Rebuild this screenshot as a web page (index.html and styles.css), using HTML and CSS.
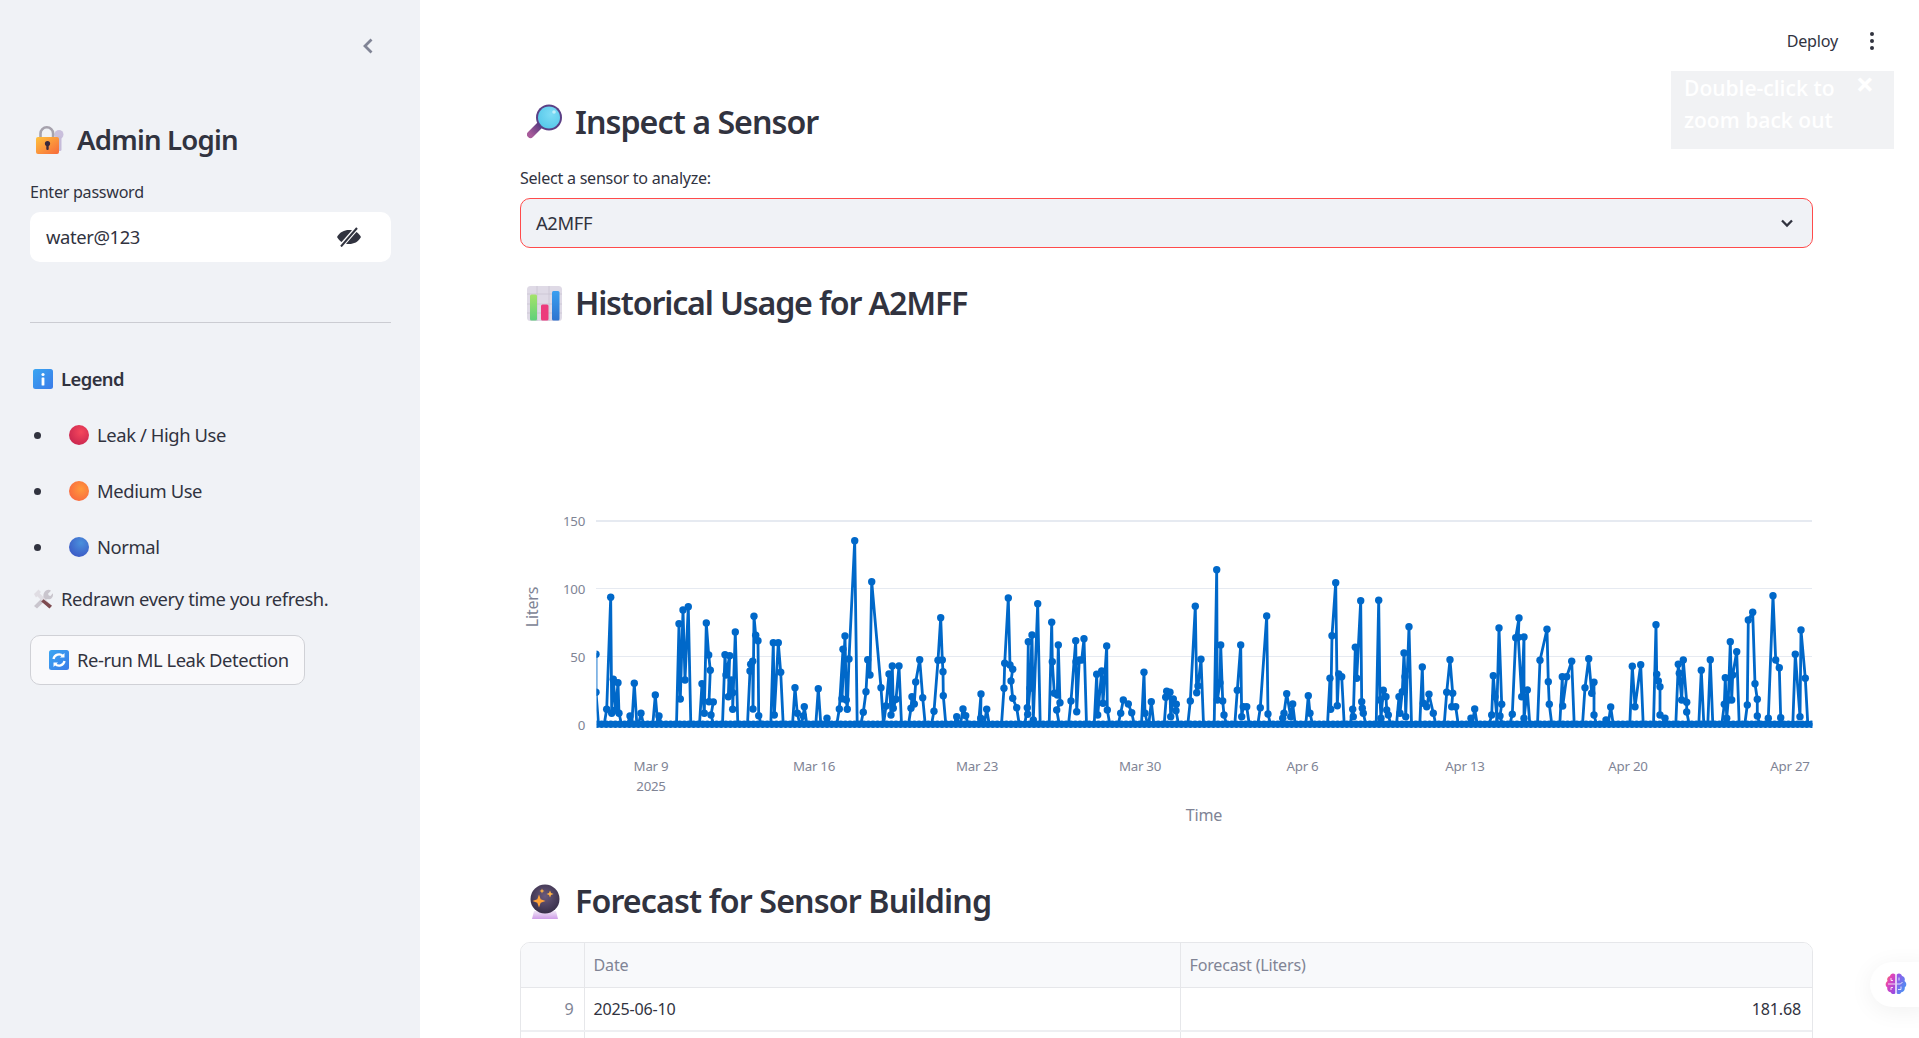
FILE: index.html
```html
<!DOCTYPE html>
<html lang="en">
<head>
<meta charset="utf-8">
<title>Water Sensor Dashboard</title>
<link rel="stylesheet" href="styles.css">
</head>
<body>
<div class="app">
  <aside class="sidebar">
    <div class="collapse-row">
      <svg class="chev-left" viewBox="0 0 12 18" width="12" height="18"><path d="M9.500 2.500 3 9l6.500 6.500" fill="none" stroke="#808495" stroke-width="2.800"/></svg>
    </div>
    <h2 class="side-title">
      <svg class="side-emoji" viewBox="0 0 30 30" width="30" height="30">
        <defs><linearGradient id="lockg" x1="0" y1="0" x2="1" y2="1"><stop offset="0" stop-color="#ffc23d"/><stop offset="1" stop-color="#f7693a"/></linearGradient></defs>
        <circle cx="24" cy="9.500" r="4.500" fill="#c9bfdc"/><rect x="22" y="11" width="4.500" height="15" rx="1.500" fill="#c6bcd9"/>
        <path d="M5.500 14V8.500a6.300 6.300 0 0 1 12.600 0V14" fill="none" stroke="#a6a2ad" stroke-width="2.600"/>
        <rect x="1" y="12" width="23" height="17" rx="2" fill="url(#lockg)"/>
        <circle cx="12.500" cy="18.500" r="2.600" fill="#3b2a3c"/><rect x="11.300" y="19" width="2.400" height="6" rx="1" fill="#3b2a3c"/>
      </svg>
      <span>Admin Login</span>
    </h2>
    <label class="field-label side-label">Enter password</label>
    <div class="pw-input">
      <span class="pw-value">water@123</span>
      <svg class="eye" viewBox="0 0 26 20" width="26" height="20">
        <path d="M1 10C4 5 8 3 13 3s9 2 12 7c-3 5-7 7-12 7S4 15 1 10z" fill="#31333f"/>
        <path d="M5.500 18.500 20.500 1.500" stroke="#fff" stroke-width="4.500"/>
        <path d="M5 19.500 21 1" stroke="#31333f" stroke-width="2"/>
      </svg>
    </div>
    <hr class="side-rule">
    <p class="legend-title">
      <svg class="inline-emoji" viewBox="0 0 20 20" width="20" height="20"><defs><linearGradient id="infog" x1="0" y1="0" x2="1" y2="1"><stop offset="0" stop-color="#3aa6f2"/><stop offset="1" stop-color="#3b7be8"/></linearGradient></defs><rect width="20" height="20" rx="2.500" fill="url(#infog)"/><circle cx="10" cy="5.500" r="1.600" fill="#fff"/><rect x="8.600" y="8.500" width="2.800" height="8" rx=".6" fill="#fff"/></svg>
      <strong>Legend</strong>
    </p>
    <ul class="legend-list">
      <li class="legend-item">
        <svg class="dot-emoji" viewBox="0 0 20 20" width="20" height="20"><defs><radialGradient id="redg" cx=".6" cy=".35" r=".7"><stop offset="0" stop-color="#f5475c"/><stop offset="1" stop-color="#c9264f"/></radialGradient></defs><circle cx="10" cy="10" r="10" fill="url(#redg)"/></svg>
        <span>Leak / High Use</span>
      </li>
      <li class="legend-item">
        <svg class="dot-emoji" viewBox="0 0 20 20" width="20" height="20"><defs><radialGradient id="orag" cx=".6" cy=".4" r=".7"><stop offset="0" stop-color="#ff9a3c"/><stop offset="1" stop-color="#f9663f"/></radialGradient></defs><circle cx="10" cy="10" r="10" fill="url(#orag)"/></svg>
        <span>Medium Use</span>
      </li>
      <li class="legend-item">
        <svg class="dot-emoji" viewBox="0 0 20 20" width="20" height="20"><defs><radialGradient id="blug" cx=".6" cy=".3" r=".8"><stop offset="0" stop-color="#4a90dc"/><stop offset="1" stop-color="#3a55c4"/></radialGradient></defs><circle cx="10" cy="10" r="10" fill="url(#blug)"/></svg>
        <span>Normal</span>
      </li>
    </ul>
    <p class="note">
      <svg class="inline-emoji" viewBox="0 0 20 20" width="20" height="20">
        <path d="M13 1.500c2-1 4-.8 5 .3l-3 3 .8 1.600 1.700.6 2.300-2.800c.6 2 0 4-1.500 5.200-1.300 1-3 1.200-4.400.6L4 19.500 1 17l9.500-9.500c-.4-2.300.6-4.800 2.500-6z" fill="#c9c5cd"/>
        <path d="M1 5 5.500.5l2.500 2.500-1.300 1.300L19 16.700l-2.500 2.800L4.300 7.200 3 8.500z" fill="#e0dde3"/>
        <path d="M10.500 10.200 19 16.700l-2.500 2.800-8.300-7z" fill="#7d4a4f"/>
      </svg>
      <span>Redrawn every time you refresh.</span>
    </p>
    <button class="rerun" type="button">
      <svg class="inline-emoji" viewBox="0 0 20 20" width="20" height="20"><defs><linearGradient id="refg" x1="0" y1="0" x2="1" y2="1"><stop offset="0" stop-color="#3aa6f2"/><stop offset="1" stop-color="#3b7be8"/></linearGradient></defs><rect width="20" height="20" rx="2.500" fill="url(#refg)"/><path d="M4.500 9a5.600 5.600 0 0 1 9.500-3M15.500 11a5.600 5.600 0 0 1-9.500 3" fill="none" stroke="#fff" stroke-width="2.300"/><path d="M15.500 3v4.500H11zM4.500 17v-4.500H9z" fill="#fff"/></svg>
      <span>Re-run ML Leak Detection</span>
    </button>
  </aside>

  <main class="main">
    <div class="toolbar">
      <span class="deploy">Deploy</span>
      <svg class="kebab" viewBox="0 0 6 20" width="6" height="20"><circle cx="3" cy="3" r="2" fill="#31333f"/><circle cx="3" cy="10" r="2" fill="#31333f"/><circle cx="3" cy="17" r="2" fill="#31333f"/></svg>
    </div>
    <div class="content">
      <h3 class="heading heading-first">
        <svg class="head-emoji" viewBox="0 0 36 36" width="36" height="36">
          <defs><radialGradient id="lensg" cx=".6" cy=".35" r=".7"><stop offset="0" stop-color="#7edcf5"/><stop offset="1" stop-color="#56c8ea"/></radialGradient><linearGradient id="handg" x1="1" y1="0" x2="0" y2="1"><stop offset="0" stop-color="#5c3a80"/><stop offset="1" stop-color="#a75b9a"/></linearGradient></defs>
          <path d="M13 21 3.500 30.500" stroke="url(#handg)" stroke-width="7" stroke-linecap="round"/>
          <circle cx="22" cy="13.500" r="13" fill="#5b3f85"/><circle cx="22" cy="13.500" r="11" fill="url(#lensg)"/><circle cx="27" cy="8" r="1.800" fill="#bfeefa"/>
        </svg>
        <span>Inspect a Sensor</span>
      </h3>
      <label class="field-label main-label">Select a sensor to analyze:</label>
      <div class="select">
        <span>A2MFF</span>
        <svg class="chev-down" viewBox="0 0 14 10" width="14" height="10"><path d="M2 2.500 7 7.500l5-5" fill="none" stroke="#31333f" stroke-width="2.300"/></svg>
      </div>
      <h3 class="heading heading-second">
        <svg class="head-emoji" viewBox="0 0 36 36" width="36" height="36">
          <defs><linearGradient id="bgr" x1="0" y1="0" x2="0" y2="1"><stop offset="0" stop-color="#a5e36a"/><stop offset="1" stop-color="#5fd07a"/></linearGradient><linearGradient id="bbl" x1="0" y1="0" x2="0" y2="1"><stop offset="0" stop-color="#3b9ff0"/><stop offset="1" stop-color="#2e74cf"/></linearGradient></defs>
          <rect width="35" height="35" rx="3.500" fill="#dfdae6"/>
          <path d="M0 8h35M0 18h35M0 27h35M10 0v35M22 0v35" stroke="#c9c4d2" stroke-width=".8"/>
          <rect x="3" y="8.500" width="7" height="26" rx="1.500" fill="url(#bgr)"/>
          <rect x="14" y="18.500" width="7.500" height="16" rx="1.500" fill="#ec3a7c"/>
          <rect x="25" y="5" width="7.500" height="29.500" rx="1.500" fill="url(#bbl)"/>
        </svg>
        <span>Historical Usage for A2MFF</span>
      </h3>
      <svg class="chart" viewBox="520 325 1293 535" width="1293" height="535" role="img" aria-label="Historical usage line chart">
        <defs><clipPath id="plot-clip"><rect x="596.500" y="480" width="1216" height="260"/></clipPath></defs>
        <g class="grid">
          <line x1="596" x2="1812" y1="521" y2="521" class="grid-top"/>
          <line x1="596" x2="1812" y1="588.500" y2="588.500"/>
          <line x1="596" x2="1812" y1="656.500" y2="656.500"/>
          <line x1="596" x2="1812" y1="724.500" y2="724.500"/>
        </g>
        <g class="ticks-y">
          <text x="585" y="526">150</text>
          <text x="585" y="594">100</text>
          <text x="585" y="662">50</text>
          <text x="585" y="730">0</text>
        </g>
        <g class="ticks-x">
          <text x="651" y="771">Mar 9</text>
          <text x="651" y="791">2025</text>
          <text x="814" y="771">Mar 16</text>
          <text x="977" y="771">Mar 23</text>
          <text x="1140" y="771">Mar 30</text>
          <text x="1302.500" y="771">Apr 6</text>
          <text x="1465" y="771">Apr 13</text>
          <text x="1628" y="771">Apr 20</text>
          <text x="1790" y="771">Apr 27</text>
        </g>
        <text class="axis-title" x="1204" y="821">Time</text>
        <text class="axis-title" transform="translate(538 607) rotate(-90)">Liters</text>
        <g id="series" clip-path="url(#plot-clip)"></g>
      </svg>
      <h3 class="heading heading-third">
        <svg class="head-emoji" viewBox="0 0 36 36" width="36" height="36">
          <defs><radialGradient id="ballg" cx=".5" cy=".4" r=".7"><stop offset="0" stop-color="#6a5a7c"/><stop offset="1" stop-color="#2f2740"/></radialGradient><linearGradient id="baseg" x1="0" y1="0" x2="0" y2="1"><stop offset="0" stop-color="#efe6f5"/><stop offset="1" stop-color="#cf9de8"/></linearGradient></defs>
          <path d="M7 27h22l2 8H5z" fill="url(#baseg)"/>
          <circle cx="18" cy="15" r="14.500" fill="url(#ballg)"/>
          <path d="M12 10.500l1.700 4.800 4.800 1.700-4.800 1.700L12 23.500l-1.700-4.800-4.800-1.700 4.800-1.700z" fill="#ffa33a"/>
          <path d="M23 6.500l1 2.500 2.500 1-2.500 1-1 2.500-1-2.500-2.500-1 2.500-1z" fill="#ffb347"/>
          <path d="M15 4.500l.7 1.800 1.800.7-1.800.7-.7 1.800-.7-1.800-1.800-.7 1.800-.7z" fill="#ffb347"/>
        </svg>
        <span>Forecast for Sensor Building</span>
      </h3>
      <div class="table-wrap">
        <table class="forecast">
          <thead>
            <tr><th class="col-index"></th><th class="col-date">Date</th><th class="col-value">Forecast (Liters)</th></tr>
          </thead>
          <tbody>
            <tr><td class="cell-index">9</td><td>2025-06-10</td><td class="cell-num">181.68</td></tr>
            <tr><td class="cell-index"></td><td></td><td class="cell-num"></td></tr>
          </tbody>
        </table>
      </div>
    </div>
  </main>
</div>

<div class="notifier">
  <span class="notifier-close">×</span>
  <p class="notifier-text">Double-click to<br>zoom back out</p>
</div>

<div class="brain-pill">
  <svg viewBox="0 0 24 24" width="24" height="24">
    <defs>
      <linearGradient id="brainl" x1="0" y1="0" x2="1" y2="1"><stop offset="0" stop-color="#ff9a2e"/><stop offset=".35" stop-color="#e344b8"/><stop offset="1" stop-color="#8a4be8"/></linearGradient>
      <linearGradient id="brainr" x1="0" y1="0" x2="1" y2="1"><stop offset="0" stop-color="#a04fe6"/><stop offset="1" stop-color="#3aa0f5"/></linearGradient>
    </defs>
    <path d="M11.300 2.500C9.500 .8 6.500 1.500 6 4 3.500 4.500 2.500 7 3.500 9 1.200 10.500 1 14 3.300 15.500 2.800 18 4.500 20 6.500 20c.7 2.200 3.500 2.800 4.800 1.200z" fill="url(#brainl)"/>
    <path d="M12.700 2.500C14.500 .8 17.500 1.500 18 4c2.500.5 3.500 3 2.500 5 2.300 1.500 2.500 5 .2 6.500.5 2.500-1.200 4.500-3.200 4.500-.7 2.200-3.500 2.800-4.800 1.200z" fill="url(#brainr)"/>
    <path d="M4 12h7M7 6v2.500h2M7 18v-2.500h2M13 12h3.500l2 -2M15 5.500v3M17 14.500v3h-3" fill="none" stroke="#fff" stroke-width=".8"/>
  </svg>
</div>
<script src="chart.js"></script>
</body>
</html>
```

FILE: styles.css
```css
* { box-sizing: border-box; }
html, body { margin: 0; height: 100%; overflow: hidden; background: #fff; }
body { font-family: "Noto Sans", "Open Sans", sans-serif; font-size: 18.4px; letter-spacing: -.4px; color: #31333f; }
h2, h3, p, ul { margin: 0; padding: 0; }

.app { display: flex; height: 100vh; }

.sidebar { flex: 0 0 420px; background: #f0f2f6; padding: 0 29px 0 30px; display: flex; flex-direction: column; }
.collapse-row { height: 120px; display: flex; justify-content: flex-end; padding: 37px 17px 0 0; }
.chev-left { display: block; }
.side-title { height: 40px; display: flex; align-items: center; gap: 12px; padding-left: 5px; font-size: 27.6px; font-weight: 600; line-height: 1; letter-spacing: -.8px; }
.side-emoji { flex: none; }
.field-label { display: block; height: 22px; line-height: 22px; font-size: 16.1px; letter-spacing: -.27px; }
.side-label { margin-top: 21px; }
.pw-input { margin-top: 9px; height: 50px; background: #fff; border-radius: 10px; display: flex; align-items: center; justify-content: space-between; padding: 0 29px 0 16px; }
.eye { flex: none; }
.side-rule { width: 100%; margin: 60px 0 0; border: 0; border-top: 1px solid #cbccd2; }
.legend-title { margin-top: 44px; height: 24px; display: flex; align-items: center; gap: 8px; padding-left: 3px; }
.legend-title strong { font-weight: 600; letter-spacing: -.55px; margin-bottom: 2px; }
.inline-emoji { flex: none; }
.legend-list { margin-top: 32px; list-style: none; display: flex; flex-direction: column; gap: 32px; }
.legend-item { height: 24px; display: flex; align-items: center; gap: 8px; padding-left: 39px; position: relative; }
.legend-item::before { content: ""; position: absolute; left: 4px; top: 8.500px; width: 7px; height: 7px; border-radius: 50%; background: #31333f; }
.dot-emoji { flex: none; }
.note { margin-top: 28px; height: 24px; display: flex; align-items: center; gap: 8px; padding-left: 3px; }
.rerun { margin-top: 24px; width: 275px; height: 50px; display: flex; align-items: center; gap: 8px; padding: 0 0 0 18px; background: #f9f9fb; border: 1px solid #d0d1d6; border-radius: 10px; font: inherit; letter-spacing: -.45px; color: inherit; }
.pw-value, .legend-item span, .note span, .rerun span, .select span { margin-bottom: 2px; }

.main { flex: 1 1 auto; min-width: 0; display: flex; flex-direction: column; }
.toolbar { height: 82px; flex: none; display: flex; align-items: center; justify-content: flex-end; gap: 31px; padding-right: 44px; }
.deploy { font-size: 16.1px; letter-spacing: -.2px; }
.kebab { display: block; }
.content { padding: 0 106px 0 100px; }
.heading { height: 44px; display: flex; align-items: center; gap: 12px; padding-left: 7px; font-size: 32.2px; font-weight: 600; line-height: 1; white-space: nowrap; letter-spacing: -.97px; }
.head-emoji { flex: none; }
.heading-first { margin-top: 18px; }
.main-label { margin-top: 23px; }
.select { margin-top: 9px; height: 50px; background: #f0f2f6; border: 1px solid #ff4b4b; border-radius: 10px; display: flex; align-items: center; justify-content: space-between; padding: 0 18px 0 15px; }
.chev-down { flex: none; }
.heading-second { margin-top: 34px; height: 43px; letter-spacing: -1.17px; }
.chart { display: block; }
.heading-third { margin-top: 19px; height: 45px; letter-spacing: -.88px; }

.grid line { stroke: #e6eaf1; stroke-width: 1; }
.grid .grid-top { stroke-width: 2; }
.ticks-y text { text-anchor: end; font-size: 13.300px; letter-spacing: -.25px; fill: #808495; }
.ticks-x text { text-anchor: middle; font-size: 13.300px; letter-spacing: -.25px; fill: #808495; }
.axis-title { text-anchor: middle; font-size: 16.100px; letter-spacing: -.2px; fill: #808495; }
.series-line { fill: none; stroke: #0068c9; stroke-width: 2.800; stroke-linejoin: round; }
.series-dot { fill: #0068c9; }

.table-wrap { margin-top: 18px; width: 1293px; border: 1px solid #e6e7ea; border-radius: 10px; overflow: hidden; }
.forecast { width: 100%; border-collapse: collapse; table-layout: fixed; font-size: 16.100px; letter-spacing: -.2px; }
.forecast th { height: 44px; background: #f8f9fb; color: #808495; font-weight: 400; text-align: left; padding: 0 9px; border-bottom: 1px solid #e6e7ea; }
.forecast td { height: 44px; padding: 0 9px; border-bottom: 2px solid #eeeff2; }
.forecast th + th, .forecast td + td { border-left: 1px solid #e6e7ea; }
.forecast td.cell-num { padding-right: 11px; }
.forecast td.cell-index { padding-right: 10px; }
.col-index { width: 63px; }
.col-date { width: 596px; }
.cell-index { text-align: right; color: #808495; }
.cell-num { text-align: right; }

.notifier { position: absolute; left: 1671px; top: 71px; width: 223px; height: 78px; background: #f1f2f4; color: #fff; font-family: "Open Sans", sans-serif; font-size: 21px; letter-spacing: 0; padding: 1px 13px; }
.notifier-text { line-height: 32px; font-weight: 600; }
.notifier-close { position: absolute; right: 20px; top: 0; font-size: 32px; line-height: 26px; font-weight: 700; }

.brain-pill { position: absolute; left: 1870px; top: 962px; width: 60px; height: 45px; padding: 10px 0 0 14px; background: #fff; border-radius: 23px 0 0 23px; box-shadow: 0 4px 24px rgba(0, 0, 0, .06); }
.brain-pill svg { display: block; }
```

FILE: chart.js
```javascript
// Transcribed series: [x, y] in crop units (3 crop px = 1 screen px); a third item keeps the line off the baseline until the next point.
var crops = [
  { ox: 510, pts: [[258,463,1],[258,577],[290,628,1],[302,292,1],[305,640,1],[310,538,1],[317,630,1],[324,548,1],[327,640],[360,648],[373,550],[393,640],[436,585],[447,648],[507,371,1],[511,597,1],[519,330,1],[525,540,1],[535,320],[576,551,1],[583,640,1],[589,369,1],[596,465,1],[601,511,1],[597,605,1],[610,606,1],[603,645],[645,464,1],[648,525,1],[659,467,1],[655,590,1],[664,540,1],[668,578,1],[668,628,1],[676,396],[720,513,1],[722,493,1],[728,484,1],[729,627,1],[732,349,1],[737,406,1],[744,422,1],[746,647],[790,428,1],[793,645,1],[805,428,1],[812,517],[855,563,1],[862,640],[880,648,1],[883,620],[925,566],[951,655],[988,627,1],[999,448,1],[996,596,1],[1005,408,1],[1009,600,1],[1012,628,1],[1017,477,1],[1034,122],[1060,637,1],[1068,575,1],[1073,479,1],[1080,525,1],[1085,245,1],[1113,563],[1128,618,1],[1137,522,1],[1143,645,1],[1147,498,1],[1150,625,1],[1158,598,1],[1167,498],[1203,625,1],[1206,590,1],[1213,612,1],[1217,546,1],[1229,479,1],[1238,593],[1272,634,1],[1284,481,1],[1292,353,1],[1297,480,1],[1299,515,1],[1300,587],[1340,650],[1359,627,1],[1367,647],[1413,582,1],[1412,655],[1430,628]] },
  { ox: 1000, pts: [[12,565,1],[14,490,1],[25,294,1],[30,495,1],[38,508,1],[33,543,1],[38,595,1],[50,623],[82,623,1],[85,425,1],[83,643,1],[90,565,1],[96,405,1],[100,660,1],[113,311],[155,367,1],[157,485,1],[163,580,1],[172,585,1],[175,435,1],[180,608,1],[170,630],[213,603,1],[227,422,1],[228,485,1],[230,635,1],[238,480,1],[245,480,1],[252,416],[290,523,1],[293,645,1],[305,513,1],[309,610,1],[320,438,1],[322,630],[362,640,1],[370,600,1],[385,612,1],[395,638],[432,517,1],[435,640],[454,605],[500,574,1],[497,592,1],[510,577,1],[512,650,1],[520,597,1],[529,613,1],[528,632],[571,603,1],[586,319,1],[590,578,1],[594,558,1],[603,478],[650,209,1],[652,600,1],[660,548,1],[662,435,1],[668,603,1],[672,645],[712,571,1],[722,435,1],[725,650,1],[730,620,1],[740,620],[781,623,1],[800,348,1],[804,642],[848,655,1],[852,640,1],[860,581,1],[872,650,1],[878,612],[925,587,1],[930,640],[990,535,1],[992,628,1],[996,407,1],[1007,248,1],[1012,617,1],[1016,522,1],[1025,530],[1058,628,1],[1060,650,1],[1066,442,1],[1070,535,1],[1082,302,1],[1085,605,1],[1087,625,1],[1090,640],[1136,301,1],[1140,600,1],[1143,655,1],[1150,571,1],[1158,590,1],[1160,630,1],[1165,645],[1197,590,1],[1200,640,1],[1207,575,1],[1212,459,1],[1215,530,1],[1217,650,1],[1227,380],[1267,501,1],[1270,610,1],[1280,620,1],[1287,583,1],[1300,640],[1340,577,1],[1350,479,1],[1358,580,1],[1355,620,1],[1367,620],[1413,655],[1424,627],[1475,645,1],[1480,527,1],[1485,590]] },
  { ox: 1450, pts: [[147,384,1],[155,613,1],[150,648],[187,643,1],[197,413,1],[207,354,1],[205,412,1],[215,590,1],[222,411,1],[222,655,1],[232,570],[270,481,1],[291,388,1],[295,545,1],[298,613],[337,530,1],[338,618,1],[350,530,1],[365,484],[405,563,1],[416,476,1],[425,580,1],[432,547,1],[432,645],[468,660],[482,621],[547,499,1],[555,620,1],[572,494],[618,374,1],[620,523,1],[625,543,1],[630,560,1],[630,645,1],[645,655],[685,493,1],[688,520,1],[695,600,1],[700,480,1],[710,607,1],[710,636],[754,511],[781,479],[823,613,1],[826,533,1],[830,655,1],[835,600,1],[841,425,1],[845,600,1],[848,525,1],[860,455],[892,615,1],[895,360,1],[908,337,1],[915,551,1],[922,598,1],[922,648],[955,655,1],[969,287,1],[977,480,1],[988,503,1],[992,653],[1036,463,1],[1050,650,1],[1053,390,1],[1066,535]] }
];

var NS = "http://www.w3.org/2000/svg";
var BASE = 724.3;
var group = document.getElementById("series");
var line = [];
var dots = [];

crops.forEach(function (crop) {
  crop.pts.forEach(function (p) {
    var x = crop.ox + p[0] / 3;
    var y = 500 + p[1] / 3;
    var prev = line[line.length - 1];
    if (!prev || !prev.link) {
      line.push({ x: x - 2.5, y: BASE });
    }
    line.push({ x: x, y: y, link: p[2] === 1 });
    dots.push([x, y]);
    if (p[2] !== 1) {
      line.push({ x: x + 2.5, y: BASE });
    }
  });
});

for (var bx = 597; bx <= 1814; bx += 4.6) {
  dots.push([bx, BASE]);
}

var path = document.createElementNS(NS, "polyline");
path.setAttribute("class", "series-line");
path.setAttribute("points", line.map(function (p) { return p.x.toFixed(1) + "," + p.y.toFixed(1); }).join(" "));
group.appendChild(path);

var baseline = document.createElementNS(NS, "line");
baseline.setAttribute("class", "series-line");
baseline.setAttribute("x1", 597);
baseline.setAttribute("x2", 1814);
baseline.setAttribute("y1", BASE);
baseline.setAttribute("y2", BASE);
group.appendChild(baseline);

dots.forEach(function (d) {
  var c = document.createElementNS(NS, "circle");
  c.setAttribute("class", "series-dot");
  c.setAttribute("cx", d[0].toFixed(1));
  c.setAttribute("cy", d[1].toFixed(1));
  c.setAttribute("r", 3.7);
  group.appendChild(c);
});
```
